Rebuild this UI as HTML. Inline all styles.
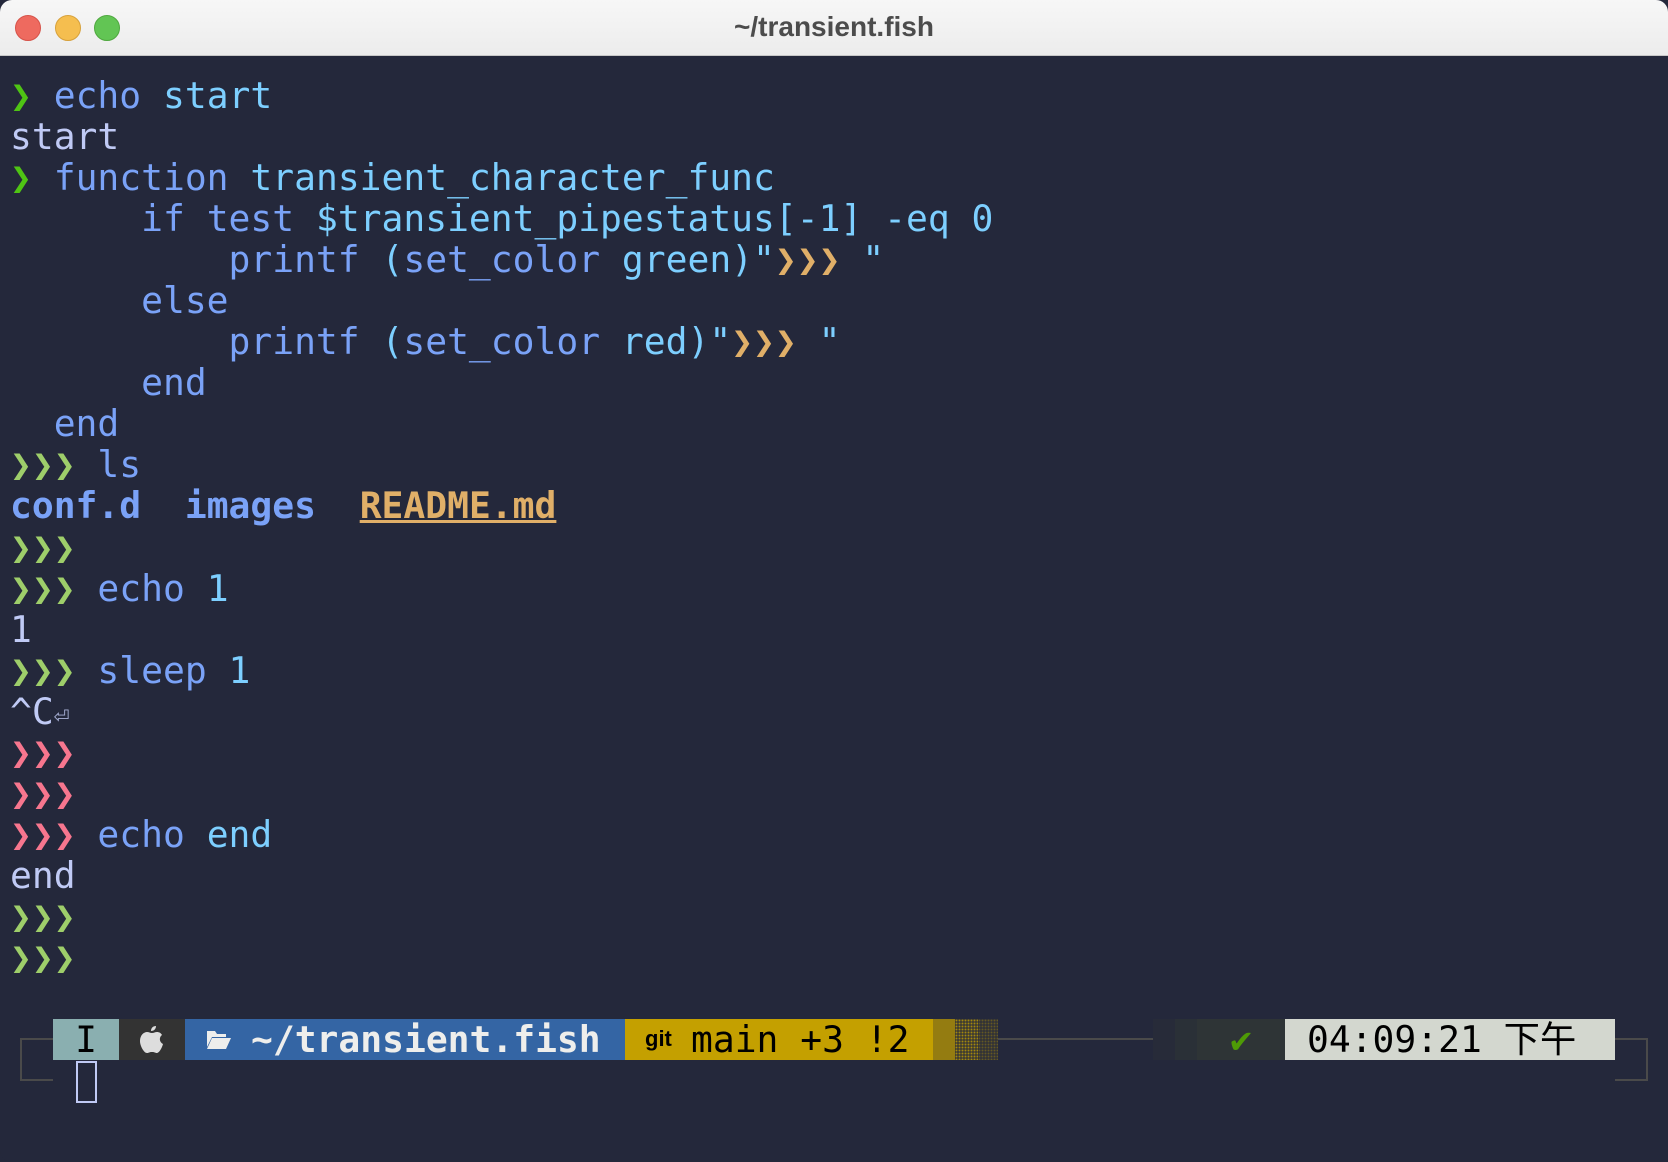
<!DOCTYPE html>
<html><head><meta charset="utf-8"><style>
html,body{margin:0;padding:0;width:1668px;height:1162px;overflow:hidden;background:#24283b}
.win{position:absolute;left:0;top:0;width:1668px;height:1162px;background:#24283b;border-radius:12px;overflow:hidden}
.tb{position:absolute;left:0;top:0;width:1668px;height:56px;background:linear-gradient(#f7f7f7,#ececec);border-bottom:1px solid #c8c8c8;box-sizing:border-box}
.tb .t{position:absolute;left:0;right:0;top:11px;text-align:center;font:bold 28px "Liberation Sans",sans-serif;color:#4c4c4c}
.dot{position:absolute;top:15px;width:26px;height:26px;border-radius:50%;box-sizing:border-box}
pre{position:absolute;left:10px;top:75px;margin:0;font:36.3px/41.05px "DejaVu Sans Mono","Liberation Mono",monospace;color:#c0caf5;letter-spacing:0}
.b{color:#7aa2f7}.c{color:#7dcfff}.g{color:#9ece6a}.G{color:#4fc414}.o{color:#e0af68}.r{color:#f7768e}.w{color:#c0caf5}
.bar{position:absolute;top:1019px;height:41px;font:36.3px/41px "DejaVu Sans Mono","Liberation Mono",monospace;white-space:pre;overflow:hidden}
.ln{position:absolute;background:#4a4a4a}
.d1{background-image:radial-gradient(#c4a000 55%,transparent 60%);background-size:3px 3px}
</style></head><body><div class="win">
<div class="tb"><div class="dot" style="left:15px;background:#ee6a5f;border:1px solid #d65349"></div><div class="dot" style="left:55px;background:#f5be4f;border:1px solid #d7a13b"></div><div class="dot" style="left:94px;background:#62c554;border:1px solid #4fa83f"></div><div class="t">~/transient.fish</div></div>
<pre><span class="G">❯</span> <span class="b">echo</span> <span class="c">start</span>
start
<span class="G">❯</span> <span class="b">function</span> <span class="c">transient_character_func</span>
<span class="b">      if</span> <span class="b">test</span> <span class="c">$transient_pipestatus[-1] -eq 0</span>
<span class="b">          printf</span> <span class="c">(</span><span class="b">set_color</span> <span class="c">green)"</span><span class="o">❯❯❯</span> <span class="c">"</span>
<span class="b">      else</span>
<span class="b">          printf</span> <span class="c">(</span><span class="b">set_color</span> <span class="c">red)"</span><span class="o">❯❯❯</span> <span class="c">"</span>
<span class="b">      end</span>
<span class="b">  end</span>
<span class="g">❯❯❯</span> <span class="b">ls</span>
<b class="b">conf.d</b>  <b class="b">images</b>  <b class="o" style="text-decoration:underline">README.md</b>
<span class="g">❯❯❯</span>
<span class="g">❯❯❯</span> <span class="b">echo</span> <span class="c">1</span>
1
<span class="g">❯❯❯</span> <span class="b">sleep</span> <span class="c">1</span>
^C<span style="font-size:26px;line-height:0;color:#a9b1d6">⏎</span>
<span class="r">❯❯❯</span>
<span class="r">❯❯❯</span>
<span class="r">❯❯❯</span> <span class="b">echo</span> <span class="c">end</span>
end
<span class="g">❯❯❯</span>
<span class="g">❯❯❯</span></pre>
<div class="ln" style="left:20px;top:1038px;width:33px;height:2px"></div>
<div class="ln" style="left:20px;top:1038px;width:2px;height:42px"></div>
<div class="ln" style="left:20px;top:1079px;width:33px;height:2px"></div>
<div class="ln" style="left:998px;top:1038px;width:155px;height:2px"></div>
<div class="ln" style="left:1615px;top:1038px;width:33px;height:2px"></div>
<div class="ln" style="left:1646px;top:1038px;width:2px;height:42px"></div>
<div class="ln" style="left:1615px;top:1079px;width:33px;height:2px"></div>
<div class="bar" style="left:53px;width:66px;background:#8aafb0;color:#000;text-align:center">I</div>
<div class="bar" style="left:119px;width:66px;background:#333"><svg style="position:absolute;left:21px;top:7px" width="24" height="28" viewBox="0 0 24 28"><path d="M16 0c0 3-2 5-5 5 0-3 2-5 5-5zM12 7c2 0 3-1 5-1 2 0 4 1 5 3-3 2-3 7 1 9-1 4-4 9-6 9-2 0-2-1-5-1-3 0-3 1-5 1C4 27 0 20 0 15 0 9 4 6 7 6c2 0 3 1 5 1z" fill="#ddd"/></svg></div>
<div class="bar" style="left:185px;width:440px;background:#3465a4;color:#eeeeec;font-weight:bold"><svg style="position:absolute;left:22px;top:12px" width="24" height="18" viewBox="0 0 24 18"><path d="M0 0h8l2 3h9v3H5L0 16z M5 7h19l-5 11H0z" fill="#eeeeec"/></svg><span style="position:absolute;left:66px">~/transient.fish</span></div>
<div class="bar" style="left:625px;width:308px;background:#c4a000;color:#000"><b style="position:absolute;left:20px;top:8px;line-height:24px;font:bold 22px/24px 'Liberation Sans',sans-serif">git</b><span style="position:absolute;left:66px">main +3 !2</span></div>
<div class="bar" style="left:933px;width:22px;background:#c4a000;opacity:.7"></div>
<div class="bar d1" style="left:955px;width:23px;opacity:.8"></div>
<div class="bar d1" style="left:978px;width:20px;opacity:.4"></div>
<div class="bar" style="left:1153px;width:22px;background:#2e3436;opacity:.3"></div>
<div class="bar" style="left:1175px;width:22px;background:#2e3436;opacity:.65"></div>
<div class="bar" style="left:1197px;width:88px;background:#2e3436;color:#4e9a06;text-align:center">✔</div>
<div class="bar" style="left:1285px;width:330px;background:#d3d7cf;color:#000;font-family:'DejaVu Sans Mono','Noto Sans CJK SC',monospace"><span style="position:absolute;left:22px">04:09:21 下午</span></div>
<div style="position:absolute;left:76px;top:1061px;width:17px;height:38px;border:2px solid #c0caf5"></div>
</div></body></html>
